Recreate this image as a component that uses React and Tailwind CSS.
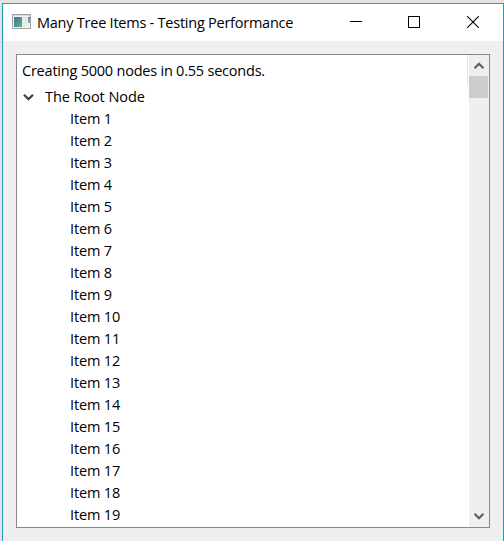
const items = Array.from({ length: 19 }, (_, i) => `Item ${i + 1}`);

function AppIcon() {
  return (
    <svg className="block h-4 w-[19px]" viewBox="0 0 19 16" shapeRendering="crispEdges">
      <defs>
        <linearGradient id="pane" x1="0" y1="0" x2="1" y2="1">
          <stop offset="0" stopColor="#4173a0" />
          <stop offset="1" stopColor="#62b382" />
        </linearGradient>
        <linearGradient id="strip" x1="0" y1="0" x2="0" y2="1">
          <stop offset="0" stopColor="#4a86b0" />
          <stop offset="1" stopColor="#7cc79a" />
        </linearGradient>
      </defs>
      <rect x="0.5" y="0.5" width="18" height="14" fill="#f1f2f3" stroke="#a0a4aa" />
      <rect x="1" y="1" width="17" height="1" fill="#d5d8dc" />
      <rect x="2" y="3" width="8" height="10" fill="url(#pane)" />
      <rect x="11" y="3" width="4" height="10" fill="#e5e7e8" />
      <rect x="16" y="3" width="2" height="6" fill="url(#strip)" />
    </svg>
  );
}

function Chevron({ className, up, color }) {
  return (
    <svg className={className} viewBox="0 0 10 8" fill="none" stroke={color} strokeWidth="2.3">
      <path d={up ? "M0.5 6.3 L5 1.8 L9.5 6.3" : "M0.5 1.7 L5 6.2 L9.5 1.7"} />
    </svg>
  );
}

function TitleBar() {
  return (
    <header className="flex h-[37px] shrink-0 items-start bg-white pl-[9px]">
      <div className="pt-[10px]"><AppIcon /></div>
      <h1 className="ml-[6px] mt-[8px] h-[22px] whitespace-nowrap text-[14.5px] leading-[22px] tracking-[-0.24px]">
        Many Tree Items - Testing Performance
      </h1>
      <div className="ml-auto mr-[24px] mt-[12px] flex">
        <svg className="h-3 w-3" viewBox="0 0 12 12" shapeRendering="crispEdges"><path d="M0 5.5H12" stroke="black" /></svg>
        <svg className="ml-[46px] h-3 w-3" viewBox="0 0 12 12" fill="none" shapeRendering="crispEdges"><rect x="0.5" y="0.5" width="11" height="11" stroke="black" /></svg>
        <svg className="ml-[47px] h-3 w-3" viewBox="0 0 12 12" stroke="black" strokeWidth="1.1"><path d="M0.2 0.2L11.8 11.8M11.8 0.2L0.2 11.8" /></svg>
      </div>
    </header>
  );
}

function ScrollBar() {
  return (
    <div className="flex w-5 shrink-0 flex-col bg-[#efefef]">
      <div className="h-[21px] pl-[4.5px] pt-[6.5px]"><Chevron up color="#606060" className="block h-2 w-[10px]" /></div>
      <div className="h-[22px] w-[19px] bg-[#cdcdcd]" />
      <div className="mt-auto h-[15px] pl-[4.5px]"><Chevron color="#606060" className="block h-2 w-[10px]" /></div>
    </div>
  );
}

export default function App() {
  return (
    <div className="h-[541px] w-[504px] overflow-hidden bg-[#e3e3e3] pl-[2px] pt-[3px] font-['Open_Sans',sans-serif] text-black">
      <div className="flex h-[538px] w-[502px] flex-col border-x border-t border-[#1f9fb8] bg-[#efefef]">
        <TitleBar />
        <main className="ml-[13px] mt-[13px] flex h-[474px] w-[474px] border border-[#828790] bg-white">
          <div className="min-w-0 flex-1 pl-[5px] pt-[5px] text-[14.5px] leading-[22px] tracking-[-0.22px]">
            <p className="h-[26px]">Creating 5000 nodes in 0.55 seconds.</p>
            <div className="flex h-[22px] items-center">
              <Chevron color="#404040" className="ml-[1px] h-2 w-[11px]" />
              <span className="ml-[11px] tracking-[-0.08px]">The Root Node</span>
            </div>
            <ul className="pl-[48px] tracking-[-0.16px]">
              {items.map((item) => <li key={item} className="h-[22px]">{item}</li>)}
            </ul>
          </div>
          <div className="mr-px h-[30px] w-px bg-[#e3e3e3]" />
          <ScrollBar />
        </main>
      </div>
    </div>
  );
}
